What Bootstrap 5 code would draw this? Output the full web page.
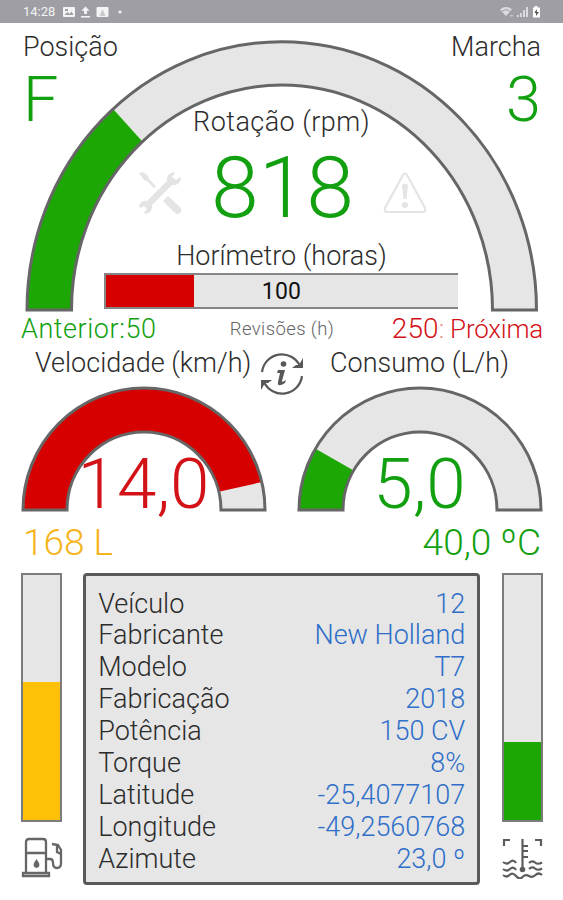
<!DOCTYPE html>
<html lang="pt-BR">
<head>
<meta charset="utf-8">
<meta name="viewport" content="width=device-width, initial-scale=1">
<title>Painel do trator</title>
<link href="https://cdn.jsdelivr.net/npm/bootstrap@5.3.0/dist/css/bootstrap.min.css" rel="stylesheet">
<style>
  :root { --ok:#1da704; --okt:#12a010; --bad:#d60000; --warn:#ffc107; --line:#666; --face:#e6e6e6; }
  body { font-family: Roboto, "Liberation Sans", sans-serif; font-weight: 300; color:#2c2c2c; background:#fff; overflow:hidden; }
  svg { display:block; }
  .screen { width:563px; height:900px; }
  .status { height:23px; background:#9f9ea4; color:#f4f4f6; font-size:13px; font-weight:400; padding:0 20px 0 23px; }
  .stack { display:grid; }
  .stack > * { grid-area:1/1; }
  .lbl { font-size:27px; line-height:32px; white-space:nowrap; }
  .t-ok { color:var(--okt); } .t-bad { color:#d31218; } .t-warn { color:#f6b41c; }
  .corners { padding:8px 22px 0 23px; }
  .gear { font-size:63px; line-height:64px; margin-top:5px; }
  .core { padding-top:83px; }
  .wide { letter-spacing:.45px; }
  .rpm { font-size:86px; line-height:88px; margin:6px 0 8px; }
  .warnrow { width:290px; margin-left:2px; }
  .hours { width:354px; height:36px; background:var(--face); border:2px solid #858585; border-right:0; margin:1px 2px 0 0; }
  .hours-fill { height:32px; background:var(--bad); }
  .hours-val { font-size:23px; line-height:33px; font-weight:400; color:#111; letter-spacing:.3px; }
  .rev { padding:1px 20px 0 21px; height:35px; }
  .prev { letter-spacing:.55px; }
  .next-lbl { font-size:26px; letter-spacing:-.2px; }
  .next-num { font-size:28px; letter-spacing:.1px; }
  .rev-mid { font-size:18.5px; color:#666; letter-spacing:.4px; }
  .titles { height:38px; padding:0 54px 0 35px; }
  .info { margin:5px 0 0 -17px; }
  .duo { height:127px; padding:0 20px; }
  .big { font-size:71px; line-height:72px; padding-top:63px; }
  .levels { font-size:37px; line-height:40px; padding:11px 22px 0 23px; height:61px; }
  .bottom { padding:0 20.5px 0 21px; }
  .side { width:41px; }
  .side svg { margin-top:15px; }
  .tank { width:41px; height:249px; background:var(--face); border:2px solid #7c7c7c; }
  .fuel { background:var(--warn); }
  .temp { background:var(--ok); }
  .panel { width:397px; height:312px; background:var(--face); border:3px solid #5a5a5a; border-radius:4px; padding:12.5px 12px 0; font-size:27px; line-height:31.9px; }
  .val { color:#2f6fc9; }
</style>
</head>
<body>
<div class="screen d-flex flex-column">
  <header class="status d-flex justify-content-between align-items-center">
    <div class="d-flex align-items-center">
      <span>14:28</span>
      <svg class="ms-1" width="66" height="14" viewBox="0 0 66 14">
        <rect x="4" y="2" width="12" height="10" rx="1" fill="#f4f4f6"/><path d="M5.500 10l3-3 2 2 2-2.500 2 3.500z M6 4h3v2H6z" fill="#9f9ea4"/>
        <path d="M26.500 1.500l4 4.200h-2.600V9h-2.800V5.700h-2.600zM22 11h9v1.500h-9z" fill="#f4f4f6"/>
        <rect x="37.500" y="2" width="12" height="10" rx="1" fill="#f4f4f6"/><path d="M40.500 11l3-7 3 7z" fill="#9f9ea4" opacity=".5"/>
        <circle cx="61" cy="7" r="1.600" fill="#f4f4f6"/>
      </svg>
    </div>
    <svg width="44" height="14" viewBox="0 0 44 14">
      <path d="M1 4.500q6-4.800 12 0l-6 6.500z" fill="#dcdce0"/><path d="M3 6q4-3 8 0" fill="none" stroke="#9f9ea4"/><path d="M11 10h3v1.500h-3z" fill="#c8c8cc"/>
      <path d="M18 12v-2h1.800v2zM21 12V8h1.800v4zM24 12V5h2v7zM27 12V2h2v10z" fill="#dcdce0"/>
      <path d="M34 2.500h1.500V1h3v1.500H41V12.500h-7z" fill="#fff"/><path d="M37.500 4l-2 4h1.500v3l3-4h-2z" fill="#555"/>
    </svg>
  </header>

  <main>
    <section class="stack">
      <svg width="563" height="289" viewBox="0 23 563 289">
        <clipPath id="ringRpm"><path d="M27 310A254.500 268 0 0 1 536.500 310H492.500A210.500 225 0 0 0 71.500 310Z"/></clipPath>
        <g clip-path="url(#ringRpm)">
          <path d="M0 20H563V312H0Z" fill="#e6e6e6"/>
          <path d="M0 312V0L102 97L114 110L141 140L290 312Z" fill="#1da704"/>
        </g>
        <path d="M27 310A254.500 268 0 0 1 536.500 310H492.500A210.500 225 0 0 0 71.500 310Z" fill="none" stroke="#666" stroke-width="3"/>
      </svg>
      <div class="corners d-flex justify-content-between align-items-start">
        <div><div class="lbl">Posição</div><div class="gear t-ok">F</div></div>
        <div class="text-end"><div class="lbl">Marcha</div><div class="gear t-ok">3</div></div>
      </div>
      <div class="core d-flex flex-column align-items-center">
        <div class="lbl wide">Rotação (rpm)</div>
        <div class="warnrow d-flex justify-content-between align-items-center">
          <svg width="44" height="44" viewBox="0 0 44 44" class="mt-2">
            <g fill="#e4e4e4">
              <path d="M1 2L5 1L10 5L11 8L18 15L16 17L9 10L6 9ZM25 30L30 25L43 37Q44 40 42 42Q40 44 37 42Z"/>
              <path d="M9 30L29 10Q28 3 36 1L37 2L34 6L38 9L42 6L43 8Q41 15 34 14L14 34Q15 41 8 43L6 42L9 38L6 35L2 37L1 35Q3 29 9 30Z"/>
            </g>
          </svg>
          <div class="rpm t-ok">818</div>
          <svg width="44" height="44" viewBox="0 0 44 44" class="mt-2">
            <path d="M20 4Q22 1 24 4L42 37Q43 41 40 41H4Q1 41 2 37Z" fill="none" stroke="#e4e4e4" stroke-width="2.200"/>
            <path d="M19 14q3-3 6 0l-1.500 14h-3z" fill="#e4e4e4"/><circle cx="22" cy="34" r="3" fill="#e4e4e4"/>
          </svg>
        </div>
        <div class="lbl">Horímetro (horas)</div>
        <div class="hours stack">
          <div class="hours-fill" style="width:25%"></div>
          <div class="hours-val text-center">100</div>
        </div>
      </div>
    </section>

    <section class="rev stack">
      <div class="d-flex justify-content-between lbl">
        <span class="t-ok prev">Anterior:50</span><span class="t-bad next-lbl"><span class="next-num">250</span><span class="opacity-50">:</span> Próxima</span>
      </div>
      <div class="lbl rev-mid text-center">Revisões (h)</div>
    </section>

    <section class="titles d-flex justify-content-between align-items-start">
      <span class="lbl">Velocidade (km/h)</span>
      <svg width="44" height="44" viewBox="0 0 44 44" class="info">
        <g fill="none" stroke="#585858" stroke-width="2.200"><path d="M2 20A20 20 0 0 1 40 14M42 24A20 20 0 0 1 4 30"/></g>
        <path d="M43 6v10H32l4-3 3 0zM1 38V28h11l-4 3-3 0z" fill="#585858"/>
        <circle cx="23.500" cy="12" r="2.800" fill="#585858"/><path d="M18 18h7l-3 11q0 2 4-1l-1 3q-8 5-7-1l2-9h-3z" fill="#585858"/>
      </svg>
      <span class="lbl">Consumo (L/h)</span>
    </section>

    <section class="duo d-flex justify-content-between">
      <div class="stack">
        <svg width="247" height="127" viewBox="20 385 247 127">
          <clipPath id="ringSpeed"><path d="M23 510A121 122 0 0 1 265 510H221A77 78 0 0 0 67 510Z"/></clipPath>
          <g clip-path="url(#ringSpeed)">
            <path d="M20 380H270V512H20Z" fill="#d60000"/>
            <path d="M144 510L222 491L280 478V512H144Z" fill="#e6e6e6"/>
          </g>
          <path d="M23 510A121 122 0 0 1 265 510H221A77 78 0 0 0 67 510Z" fill="none" stroke="#666" stroke-width="3"/>
        </svg>
        <div class="big t-bad text-center">14,0</div>
      </div>
      <div class="stack">
        <svg width="247" height="127" viewBox="296 385 247 127">
          <clipPath id="ringFlow"><path d="M299 510A121 122 0 0 1 541 510H497A77 78 0 0 0 343 510Z"/></clipPath>
          <g clip-path="url(#ringFlow)">
            <path d="M290 380H550V512H290Z" fill="#e6e6e6"/>
            <path d="M290 512V434L316 449L351 469L420 512Z" fill="#1da704"/>
          </g>
          <path d="M299 510A121 122 0 0 1 541 510H497A77 78 0 0 0 343 510Z" fill="none" stroke="#666" stroke-width="3"/>
        </svg>
        <div class="big t-ok text-center">5,0</div>
      </div>
    </section>

    <section class="levels d-flex justify-content-between">
      <span class="t-warn">168 L</span><span class="t-ok">40,0 ºC</span>
    </section>

    <section class="bottom d-flex justify-content-between">
      <div class="side">
        <div class="tank d-flex flex-column justify-content-end"><div class="fuel" style="height:56.5%"></div></div>
        <svg width="42" height="42" viewBox="0 0 42 42">
          <g fill="none" stroke="#666" stroke-width="2.300"><path d="M5 37V5Q5 2 8 2H22Q25 2 25 5V37M5 16H25M2 39v-3H28v3zM26 22h3q3 0 3 4 0 5 4 5 4 0 4-5V13L37 8 31 7M36 9v6l4 2"/></g>
          <path d="M15.500 22q6 8 0 9-6-1 0-9z" fill="#666"/>
        </svg>
      </div>
      <div class="panel">
        <div class="d-flex justify-content-between"><span>Veículo</span><span class="val">12</span></div>
        <div class="d-flex justify-content-between"><span>Fabricante</span><span class="val">New Holland</span></div>
        <div class="d-flex justify-content-between"><span>Modelo</span><span class="val">T7</span></div>
        <div class="d-flex justify-content-between"><span>Fabricação</span><span class="val">2018</span></div>
        <div class="d-flex justify-content-between"><span>Potência</span><span class="val">150 CV</span></div>
        <div class="d-flex justify-content-between"><span>Torque</span><span class="val">8%</span></div>
        <div class="d-flex justify-content-between"><span>Latitude</span><span class="val">-25,4077107</span></div>
        <div class="d-flex justify-content-between"><span>Longitude</span><span class="val">-49,2560768</span></div>
        <div class="d-flex justify-content-between"><span>Azimute</span><span class="val">23,0 º</span></div>
      </div>
      <div class="side">
        <div class="tank d-flex flex-column justify-content-end"><div class="temp" style="height:32%"></div></div>
        <svg width="42" height="42" viewBox="0 0 42 42">
          <g fill="none" stroke="#5c5c5c" stroke-width="2.200"><path d="M2 9V3H8M33 3H39V9M20.500 2V32M21 9h5M21 14h5M21 20h5"/>
          <path d="M1 25q3.500 3 7 0t6 1M27 26q3-3 6-.5t7 0M1 32q3.500 3 7 0t6 1M27 32q3-3 6-.5t7 0M1 38q3.500 3 6.500 0t6.500 1 6.500 1 6.500-1 6.500-1 6.500 0"/></g><circle cx="20.500" cy="32.500" r="2.800" fill="#5c5c5c"/>
        </svg>
      </div>
    </section>
  </main>
</div>
<script src="https://cdn.jsdelivr.net/npm/bootstrap@5.3.0/dist/js/bootstrap.bundle.min.js"></script>
</body>
</html>
